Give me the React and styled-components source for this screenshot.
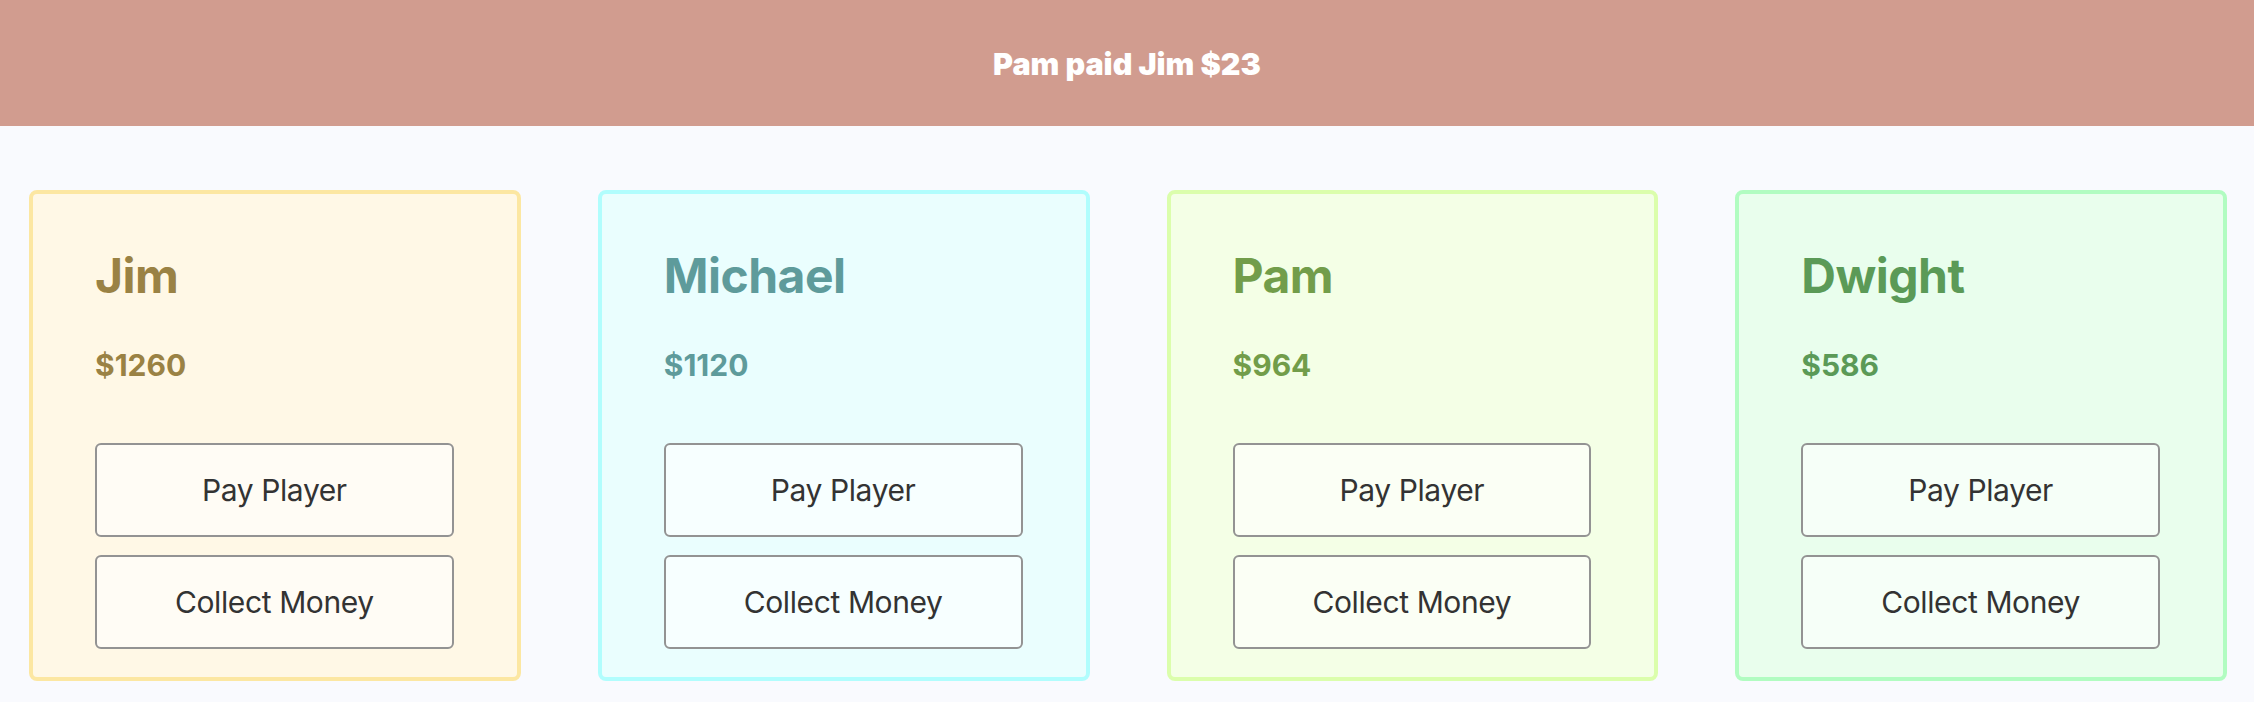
import React from "react";
import styled, { createGlobalStyle } from "styled-components";

const GlobalStyle = createGlobalStyle`
  * {
    box-sizing: border-box;
  }
  body {
    margin: 0;
    background: #f9fafe;
    font-family: Inter, "Noto Sans", sans-serif;
  }
`;

const players = [
  { name: "Jim", money: 1260, text: "#9a8244", bg: "#fff8e6", border: "#fce7a2" },
  { name: "Michael", money: 1120, text: "#5e9b9b", bg: "#eafefe", border: "#b1fdfd" },
  { name: "Pam", money: 964, text: "#729d4a", bg: "#f4ffe6", border: "#dbfeac" },
  { name: "Dwight", money: 586, text: "#5b9a57", bg: "#e9feed", border: "#b1fcc1" },
];

const Banner = styled.header`
  height: 126px;
  background: #d19c8f;
  display: flex;
  align-items: center;
  justify-content: center;
  color: #ffffff;
  font-size: 30.5px;
  font-weight: 900;
`;

const Board = styled.main`
  display: flex;
  align-items: flex-start;
  gap: 77px;
  padding: 64px 27px 0 29px;
`;

const Card = styled.section`
  flex: 1;
  display: flex;
  flex-direction: column;
  padding: 53px 63px 28px 62px;
  background: ${({ $bg }) => $bg};
  border: 4px solid ${({ $border }) => $border};
  border-radius: 8px;
  color: ${({ $text }) => $text};
`;

const Name = styled.h2`
  margin: 0;
  font-size: 48px;
  font-weight: 700;
  line-height: 58px;
  letter-spacing: -0.5px;
`;

const Money = styled.div`
  margin-top: 42px;
  font-size: 30px;
  font-weight: 700;
  line-height: 36px;
`;

const Actions = styled.div`
  margin-top: 60px;
  display: flex;
  flex-direction: column;
  gap: 18px;
`;

const Button = styled.button`
  height: 94px;
  width: 100%;
  background: rgba(255, 255, 255, 0.6);
  border: 2px solid #939393;
  border-radius: 6px;
  color: #333333;
  font-family: Inter, "Noto Sans", sans-serif;
  font-size: 30px;
  font-weight: 400;
  letter-spacing: -0.4px;
  cursor: pointer;
`;

const PlayerCard = ({ player }) => (
  <Card $bg={player.bg} $border={player.border} $text={player.text}>
    <Name>{player.name}</Name>
    <Money>${player.money}</Money>
    <Actions>
      <Button>Pay Player</Button>
      <Button>Collect Money</Button>
    </Actions>
  </Card>
);

const App = () => (
  <>
    <GlobalStyle />
    <Banner>Pam paid Jim $23</Banner>
    <Board>
      {players.map((p) => (
        <PlayerCard key={p.name} player={p} />
      ))}
    </Board>
  </>
);

export default App;
